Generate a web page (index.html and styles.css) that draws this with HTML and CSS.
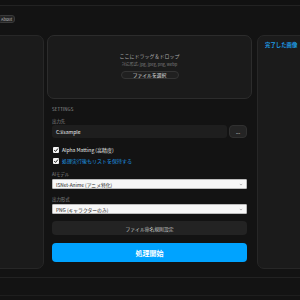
FILE: index.html
```html
<!DOCTYPE html>
<html lang="ja">
<head>
    <meta charset="UTF-8">
    <meta name="viewport" content="width=device-width, initial-scale=1.0">
    <title>Background Remover</title>
    <link rel="stylesheet" href="styles.css">
</head>
<body>
    <div class="app">
        <div class="titlebar"></div>
        <div class="toolbar">
            <button class="about-btn">About</button>
        </div>

        <div class="main">
            <aside class="panel queue-panel"></aside>

            <section class="center">
                <div class="dropzone">
                    <div class="drop-title">ここにドラッグ＆ドロップ</div>
                    <div class="drop-formats">対応形式: jpg, jpeg, png, webp</div>
                    <button class="select-btn">ファイルを選択</button>
                </div>

                <div class="settings">
                    <div class="section-title">SETTINGS</div>

                    <div class="field-label">出力先</div>
                    <div class="path-row">
                        <div class="path-input">C:¥sample</div>
                        <button class="browse-btn">...</button>
                    </div>

                    <label class="check-row first">
                        <span class="checkbox">
                            <svg viewBox="0 0 10 10"><path d="M2 5.2 L4.2 7.4 L8.2 2.6" /></svg>
                        </span>
                        <span class="check-text">Alpha Matting (高精度)</span>
                    </label>
                    <label class="check-row">
                        <span class="checkbox">
                            <svg viewBox="0 0 10 10"><path d="M2 5.2 L4.2 7.4 L8.2 2.6" /></svg>
                        </span>
                        <span class="check-text link">処理実行後もリストを保持する</span>
                    </label>

                    <div class="field-label spaced">AIモデル</div>
                    <div class="select-box">
                        <span>ISNet-Anime (アニメ特化)</span>
                        <svg class="chevron" viewBox="0 0 10 6"><path d="M2 1.5 L5 4.5 L8 1.5" /></svg>
                    </div>

                    <div class="field-label spaced">出力形式</div>
                    <div class="select-box">
                        <span>PNG (キャラクターのみ)</span>
                        <svg class="chevron" viewBox="0 0 10 6"><path d="M2 1.5 L5 4.5 L8 1.5" /></svg>
                    </div>

                    <button class="naming-btn">ファイル命名規則設定</button>
                    <button class="start-btn">処理開始</button>
                </div>
            </section>

            <aside class="panel done-panel">
                <h2 class="done-title">完了した画像</h2>
            </aside>
        </div>

        <div class="statusbar"></div>
    </div>
</body>
</html>
```

FILE: styles.css
```css
body {
    margin: 0;
    padding: 0;
    background-color: #131313;
    font-family: "Noto Sans CJK JP", "Noto Sans", sans-serif;
    color: #e6e6e6;
    overflow: hidden;
}
.app {
    width: 300px;
    height: 300px;
    display: flex;
    flex-direction: column;
    overflow: hidden;
}
.titlebar {
    height: 5px;
    background: #111111;
    border-bottom: 1px solid #222222;
}
.toolbar {
    height: 29px;
    display: flex;
    padding-top: 9px;
    box-sizing: border-box;
}
.about-btn {
    margin-left: -2px;
    height: 8px;
    padding: 0 2px;
    font-family: inherit;
    font-size: 4px;
    line-height: 6px;
    color: #bdbdbd;
    background: #242424;
    border: 1px solid #3a3a3a;
    border-radius: 3px;
}
.main {
    height: 234px;
    display: flex;
    gap: 3px;
}
.panel {
    background: #1b1b1b;
    border: 1px solid #272727;
    border-radius: 7px;
    box-sizing: border-box;
}
.queue-panel {
    flex: none;
    width: 56px;
    margin-left: -12px;
}
.center {
    flex: none;
    width: 205px;
    display: flex;
    flex-direction: column;
}
.dropzone {
    height: 64px;
    background: #1b1b1b;
    border: 1px solid #2c2c2c;
    border-radius: 7px;
    box-sizing: border-box;
    display: flex;
    flex-direction: column;
    align-items: center;
    padding-top: 16px;
}
.drop-title {
    font-size: 5px;
    line-height: 7px;
    color: #a8a8a8;
}
.drop-formats {
    margin-top: 2px;
    font-size: 4px;
    line-height: 6px;
    color: #808080;
}
.select-btn {
    margin-top: 4px;
    width: 58px;
    height: 8px;
    padding: 0;
    font-family: inherit;
    font-size: 4.8px;
    line-height: 6px;
    color: #e0e0e0;
    background: #202020;
    border: 1px solid #343434;
    border-radius: 4px;
}
.settings {
    display: flex;
    flex-direction: column;
    padding: 0 5px;
}
.section-title {
    margin-top: 7px;
    font-size: 4.4px;
    line-height: 6px;
    color: #9a9a9a;
    letter-spacing: 0.1px;
}
.field-label {
    margin-top: 6px;
    font-size: 4.4px;
    line-height: 6px;
    color: #8a8a8a;
}
.field-label.spaced {
    margin-top: 7px;
}
.path-row {
    margin-top: 1px;
    display: flex;
    gap: 2px;
    height: 13px;
}
.path-input {
    flex: 1;
    background: #1e1e1e;
    border-radius: 3px;
    font-size: 5px;
    line-height: 13px;
    padding-left: 4px;
    color: #f0f0f0;
}
.browse-btn {
    width: 18px;
    padding: 0;
    font-family: inherit;
    font-size: 5px;
    line-height: 6px;
    color: #dddddd;
    background: #242424;
    border: 1px solid #303030;
    border-radius: 4px;
}
.check-row {
    display: flex;
    align-items: center;
    gap: 3px;
    height: 7px;
    margin-top: 4px;
    padding-left: 1px;
}
.check-row.first {
    margin-top: 8px;
}
.checkbox {
    width: 6px;
    height: 6px;
    background: #f4f4f4;
    border-radius: 1px;
    display: flex;
}
.checkbox svg {
    width: 6px;
    height: 6px;
    fill: none;
    stroke: #111111;
    stroke-width: 1.6;
}
.check-text {
    font-size: 5px;
    line-height: 7px;
    color: #eeeeee;
}
.check-text.link {
    color: #1e9be6;
}
.select-box {
    margin-top: 2px;
    height: 10px;
    background: #f7f7f7;
    border: 1px solid #bcbcbc;
    border-radius: 1px;
    box-sizing: border-box;
    display: flex;
    align-items: center;
    justify-content: space-between;
    padding: 0 3px;
    font-size: 4.8px;
    color: #222222;
}
.chevron {
    width: 4px;
    height: 3px;
    fill: none;
    stroke: #777777;
    stroke-width: 1.2;
}
.naming-btn {
    margin-top: 7px;
    height: 14px;
    padding: 0;
    font-family: inherit;
    font-size: 4.8px;
    color: #cfcfcf;
    background: #232323;
    border: none;
    border-radius: 4px;
}
.start-btn {
    margin-top: 8px;
    height: 19px;
    padding: 0;
    font-family: inherit;
    font-size: 7px;
    font-weight: bold;
    color: #ffffff;
    background: #00a3ff;
    border: none;
    border-radius: 4px;
}
.done-panel {
    flex: none;
    width: 60px;
    margin-left: 2px;
    padding: 5px 7px;
}
.done-title {
    margin: 0;
    font-size: 5.4px;
    line-height: 8px;
    font-weight: bold;
    color: #1e9be6;
}
.statusbar {
    margin-top: 8px;
    height: 17px;
    background: #131313;
    border-top: 1px solid #222222;
    border-bottom: 1px solid #1e1e1e;
}
```
